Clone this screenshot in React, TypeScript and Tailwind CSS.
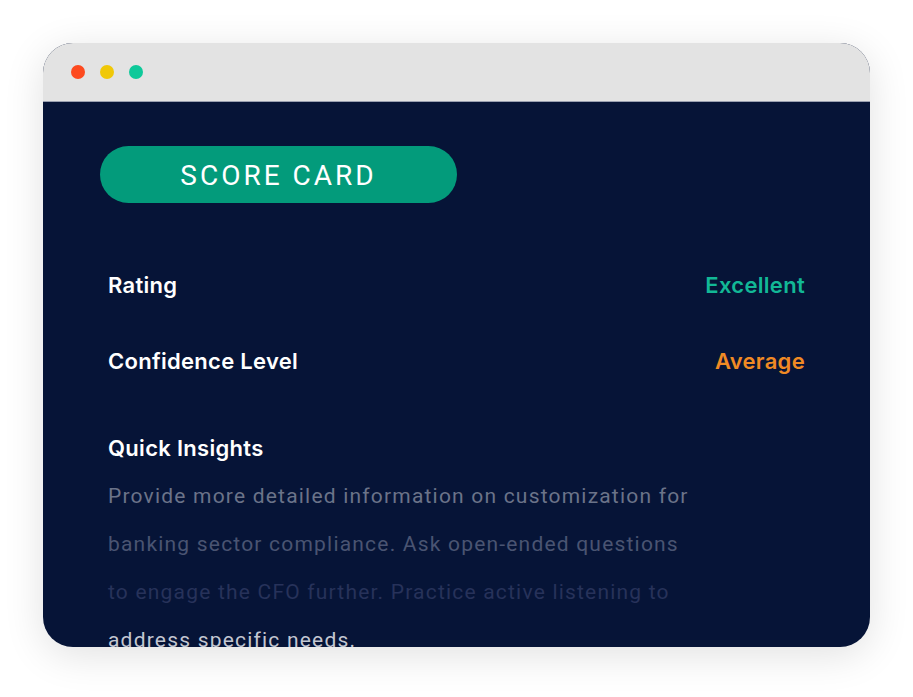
import React from 'react';

const lines = [
  { text: 'Provide more detailed information on customization for', color: 'text-[#6b7389]' },
  { text: 'banking sector compliance. Ask open-ended questions', color: 'text-[#4a5472]' },
  { text: 'to engage the CFO further. Practice active listening to', color: 'text-[#27325a]' },
  { text: 'address specific needs.', color: 'text-[#c3c7d2]' },
];

export default function App() {
  return (
    <div className="w-[913px] h-[697px] bg-white pt-[43px] pl-[43px]">
      <div className="w-[827px] h-[604px] rounded-[30px] overflow-hidden bg-[#061437] shadow-[0_8px_40px_rgba(0,0,0,0.12)] flex flex-col">
        {/* browser bar */}
        <div className="h-[59px] bg-[#e3e3e3] border-b border-[#9aa0b0] flex items-center gap-[15px] pl-[28px] shrink-0">
          <span className="w-[14px] h-[14px] rounded-full bg-[#fd4a1f]" />
          <span className="w-[14px] h-[14px] rounded-full bg-[#f0c808]" />
          <span className="w-[14px] h-[14px] rounded-full bg-[#0ec99a]" />
        </div>

        <div className="pt-[44px] pl-[57px] pr-[65px]" style={{ fontFamily: 'Inter, "Noto Sans", sans-serif' }}>
          <div
            className="w-[357px] h-[57px] rounded-full bg-[#039b7b] flex items-center justify-center text-white text-[28px] tracking-[3px] pt-[2px]"
            style={{ fontFamily: 'Roboto, sans-serif' }}
          >
            SCORE CARD
          </div>

          <div className="pl-[8px]">
            <div className="flex justify-between items-center mt-[67px] h-[30px] text-[22px] font-semibold tracking-[0.3px]">
              <span className="text-white">Rating</span>
              <span className="text-[#12b896]">Excellent</span>
            </div>
            <div className="flex justify-between items-center mt-[46px] h-[30px] text-[22px] font-semibold tracking-[0.3px]">
              <span className="text-white">Confidence Level</span>
              <span className="text-[#f08a24]">Average</span>
            </div>

            <div className="mt-[57px] h-[30px] flex items-center text-[22px] font-semibold tracking-[0.3px] text-white">
              Quick Insights
            </div>
            <div className="mt-[9px] text-[21px] leading-[48px] tracking-[1.2px]" style={{ fontFamily: 'Roboto, sans-serif' }}>
              {lines.map((l) => (
                <div key={l.text} className={`${l.color} whitespace-nowrap`}>
                  {l.text}
                </div>
              ))}
            </div>
          </div>
        </div>
      </div>
    </div>
  );
}
